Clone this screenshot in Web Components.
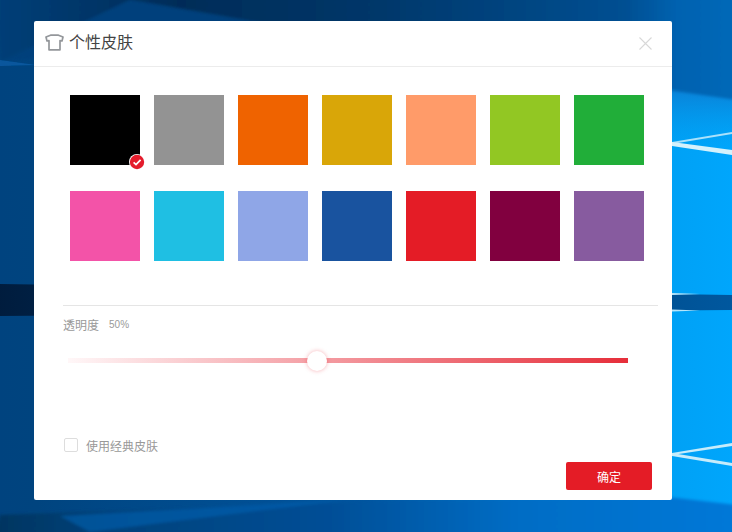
<!DOCTYPE html>
<html lang="zh">
<head>
<meta charset="utf-8">
<title>个性皮肤</title>
<style>
  html, body { margin: 0; height: 100%; overflow: hidden; }
  body { font-family: "Liberation Sans", "Noto Sans CJK SC", sans-serif; }
</style>
</head>
<body>
<skin-desktop>
  <skin-dialog heading="个性皮肤">
    <skin-swatches selected="0" colors="#000000,#939393,#ef6300,#d9a608,#ff9b69,#92c723,#21ae39,#f353a8,#1fbfe3,#8fa6e7,#19539f,#e41c26,#81003f,#875b9f"></skin-swatches>
    <skin-slider label="透明度" value="50" position="44.46"></skin-slider>
    <skin-footer label="使用经典皮肤" action="确定"></skin-footer>
  </skin-dialog>
</skin-desktop>

<script>
'use strict';

class SkinDesktop extends HTMLElement {
  constructor() {
    super();
    this.attachShadow({ mode: 'open' });
    this.shadowRoot.innerHTML = `
      <style>
        :host {
          display: block;
          position: relative;
          width: 732px;
          height: 532px;
          box-sizing: border-box;
          padding: 21px 60px 32px 34px;
          overflow: hidden;
          background: #0a6cc4;
        }
        svg { position: absolute; inset: 0; }
        .window { position: relative; height: 100%; }
      </style>
      <svg width="732" height="532" viewBox="0 0 732 532" aria-hidden="true">
        <defs>
          <linearGradient id="base" x1="0" y1="0" x2="1" y2="0">
            <stop offset="0" stop-color="#00437f"/>
            <stop offset="0.05" stop-color="#00447f"/>
            <stop offset="0.5" stop-color="#00559f"/>
            <stop offset="0.9" stop-color="#00a0f4"/>
            <stop offset="1" stop-color="#00a6fc"/>
          </linearGradient>
          <linearGradient id="top" x1="0" y1="0" x2="1" y2="0">
            <stop offset="0" stop-color="#003f78"/>
            <stop offset="0.25" stop-color="#012c58"/>
            <stop offset="0.5" stop-color="#013668"/>
            <stop offset="0.85" stop-color="#004f92"/>
            <stop offset="0.92" stop-color="#0062b0"/>
            <stop offset="1" stop-color="#0068b8"/>
          </linearGradient>
          <linearGradient id="bottom" x1="0" y1="0" x2="1" y2="0">
            <stop offset="0" stop-color="#013560"/>
            <stop offset="0.15" stop-color="#01417a"/>
            <stop offset="0.45" stop-color="#004e96"/>
            <stop offset="0.7" stop-color="#006cc4"/>
            <stop offset="1" stop-color="#0078d8"/>
          </linearGradient>
          <linearGradient id="band" x1="0" y1="0" x2="1" y2="0">
            <stop offset="0" stop-color="#001c3d"/>
            <stop offset="0.05" stop-color="#001f42"/>
            <stop offset="1" stop-color="#00589f"/>
          </linearGradient>
          <linearGradient id="fade" x1="0" y1="0" x2="0" y2="1">
            <stop offset="0" stop-color="#0a82d8"/>
            <stop offset="1" stop-color="#009cee" stop-opacity="0"/>
          </linearGradient>
          <filter id="soft" x="-10%" y="-200%" width="120%" height="500%">
            <feGaussianBlur stdDeviation="0.7"/>
          </filter>
          <filter id="softer" x="-10%" y="-20%" width="120%" height="140%">
            <feGaussianBlur stdDeviation="1.5"/>
          </filter>
        </defs>
        <rect width="732" height="532" fill="url(#base)"/>
        <rect x="660" y="90" width="72" height="60" fill="url(#fade)"/>
        <g filter="url(#softer)">
          <polygon points="-5,-5 737,-5 737,100 668,90 250,21 130,0 0,62" fill="url(#top)"/>
          <polygon points="130,0 250,21 300,28 0,62" fill="#01417c"/>
          <polygon points="-5,537 737,537 737,505 668,497 400,500 0,515" fill="url(#bottom)"/>
          <polygon points="60,516 345,500 90,532" fill="#0062b4" opacity="0.55"/>
        </g>
        <polygon points="-5,284 737,295 737,310 -5,316" fill="url(#band)"/>
        <polygon points="0,60 36,65 0,66" fill="#0a5ca5" opacity="0.8" filter="url(#soft)"/>
        <g filter="url(#soft)">
          <polygon points="672,142 732,132 732,134 672,144" fill="#a9e1fb"/>
          <polygon points="672,142 732,150 732,155 672,146" fill="#d4f1fc"/>
          <polygon points="672,293 700,294 672,295" fill="#b7e6fb"/>
          <polygon points="672,309.5 700,310.5 672,311.5" fill="#b7e6fb"/>
          <polygon points="672,453 732,443 732,446 672,455" fill="#c6ecfb"/>
          <polygon points="672,453 732,463 732,466 672,456" fill="#c6ecfb"/>
        </g>
      </svg>
      <div class="window"><slot></slot></div>
    `;
  }
}

class SkinDialog extends HTMLElement {
  constructor() {
    super();
    this.attachShadow({ mode: 'open' });
    this.shadowRoot.innerHTML = `
      <style>
        :host {
          display: flex;
          flex-direction: column;
          height: 100%;
          background: #ffffff;
          border-radius: 2px;
        }
        header {
          flex: none;
          display: flex;
          align-items: center;
          height: 45px;
          padding: 0 20px 0 11px;
          border-bottom: 1px solid #ececec;
        }
        h1 {
          flex: 1;
          margin: 0 0 6px 5px;
          font-size: 16px;
          font-weight: 400;
          color: #444444;
        }
        svg { display: block; }
        .shirt { margin-bottom: 2px; }
        main { flex: 1; display: flex; flex-direction: column; min-height: 0; }
      </style>
      <header>
        <svg class="shirt" width="19" height="17" viewBox="0 0 19 17" fill="none" stroke="#94979b" stroke-width="1.7" stroke-linejoin="round">
          <path d="M5.5 1.2 H13.5 L18 3 L17 7 L15 6.6 V15.8 H4 V6.6 L2 7 L1 3 Z"/>
        </svg>
        <h1></h1>
        <svg width="13" height="13" viewBox="0 0 13 13" stroke="#d8d8d8" stroke-width="1.1">
          <path d="M0.5 0.5 L12.5 12.5 M12.5 0.5 L0.5 12.5"/>
        </svg>
      </header>
      <main><slot></slot></main>
    `;
  }
  connectedCallback() {
    this.shadowRoot.querySelector('h1').textContent = this.getAttribute('heading');
  }
}

class SkinSwatches extends HTMLElement {
  constructor() {
    super();
    this.attachShadow({ mode: 'open' });
    this.shadowRoot.innerHTML = `
      <style>
        :host {
          display: grid;
          grid-template-columns: repeat(7, 70px);
          grid-auto-rows: 70px;
          column-gap: 14px;
          row-gap: 26px;
          padding: 28px 0 0 36px;
        }
        .swatch { position: relative; }
        .swatch svg { position: absolute; right: -5px; bottom: -5px; display: block; }
      </style>
    `;
  }
  connectedCallback() {
    let colors = this.getAttribute('colors').split(',');
    let selected = Number(this.getAttribute('selected'));
    colors.forEach((color, i) => {
      const swatch = document.createElement('div');
      swatch.className = 'swatch';
      swatch.style.background = color;
      if (i === selected) {
        swatch.innerHTML = `
          <svg width="16" height="16" viewBox="0 0 16 16">
            <circle cx="8" cy="8" r="8" fill="#ffffff"/>
            <circle cx="8" cy="8" r="7.2" fill="#e41c2c"/>
            <path d="M4.6 8.4 L7 10.6 L11.6 5.8" fill="none" stroke="#ffffff" stroke-width="1.7"/>
          </svg>`;
      }
      this.shadowRoot.appendChild(swatch);
    });
  }
}

class SkinSlider extends HTMLElement {
  constructor() {
    super();
    this.attachShadow({ mode: 'open' });
    this.shadowRoot.innerHTML = `
      <style>
        :host { display: block; margin: 44px 14px 0 29px; }
        .rule { height: 1px; background: #e5e5e5; }
        .caption {
          display: flex;
          align-items: center;
          gap: 10px;
          height: 17px;
          margin-top: 10px;
          color: #999999;
        }
        .label { font-size: 12px; }
        .value { font-size: 10px; }
        .track {
          position: relative;
          height: 5px;
          margin: 25px 30px 0 5px;
          background: linear-gradient(to right, #fff7f8, #e62e3a);
        }
        .thumb {
          position: absolute;
          top: -7.5px;
          width: 20px;
          height: 20px;
          margin-left: -10px;
          border-radius: 50%;
          background: #ffffff;
          box-shadow: 0 0 4px rgba(228, 28, 44, 0.35);
        }
      </style>
      <div class="rule"></div>
      <div class="caption"><span class="label"></span><span class="value"></span></div>
      <div class="track"><div class="thumb"></div></div>
    `;
  }
  connectedCallback() {
    this.shadowRoot.querySelector('.label').textContent = this.getAttribute('label');
    this.shadowRoot.querySelector('.value').textContent = this.getAttribute('value') + '%';
    this.shadowRoot.querySelector('.thumb').style.left = this.getAttribute('position') + '%';
  }
}

class SkinFooter extends HTMLElement {
  constructor() {
    super();
    this.attachShadow({ mode: 'open' });
    this.shadowRoot.innerHTML = `
      <style>
        :host {
          display: block;
          margin-top: auto;
          padding: 0 20px 10px 30px;
        }
        .check {
          display: flex;
          align-items: center;
          gap: 8px;
          height: 14px;
          font-size: 12px;
          color: #999999;
        }
        .box {
          width: 14px;
          height: 14px;
          box-sizing: border-box;
          border: 1px solid #dddddd;
          border-radius: 2px;
        }
        .actions { display: flex; justify-content: flex-end; margin-top: 10px; }
        button {
          width: 86px;
          height: 28px;
          padding: 0;
          border: 0;
          border-radius: 2px;
          background: #e41c26;
          color: #ffffff;
          font: inherit;
          font-size: 12px;
        }
      </style>
      <div class="check"><span class="box"></span><span class="text"></span></div>
      <div class="actions"><button type="button"></button></div>
    `;
  }
  connectedCallback() {
    this.shadowRoot.querySelector('.text').textContent = this.getAttribute('label');
    this.shadowRoot.querySelector('button').textContent = this.getAttribute('action');
  }
}

customElements.define('skin-desktop', SkinDesktop);
customElements.define('skin-dialog', SkinDialog);
customElements.define('skin-swatches', SkinSwatches);
customElements.define('skin-slider', SkinSlider);
customElements.define('skin-footer', SkinFooter);
</script>
</body>
</html>
